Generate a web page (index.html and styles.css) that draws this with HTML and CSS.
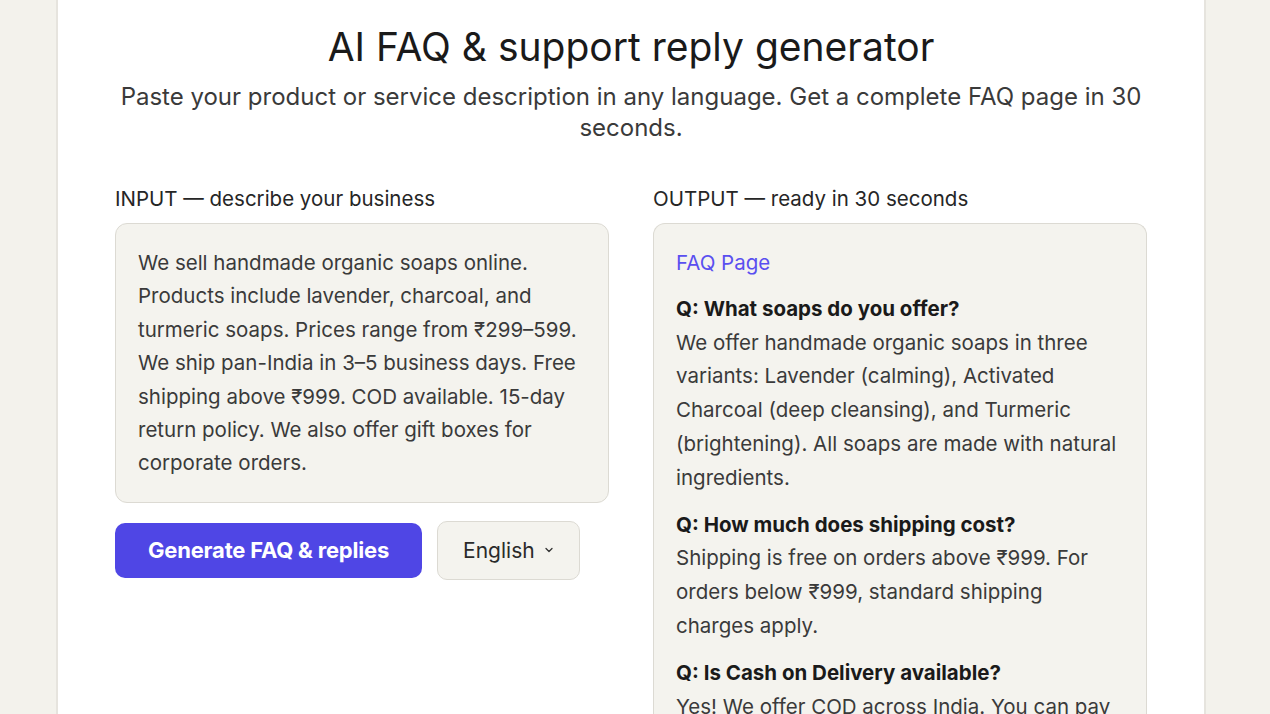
FILE: index.html
```html
<!DOCTYPE html>
<html lang="en">
<head>
    <meta charset="UTF-8">
    <title>AI FAQ &amp; support reply generator</title>
    <meta name="viewport" content="width=device-width, initial-scale=1.0">
    <link rel="stylesheet" href="styles.css">
</head>
<body>
    <div class="card">
        <h1 class="title">AI FAQ &amp; support reply generator</h1>
        <p class="subtitle">Paste your product or service description in any language. Get a complete FAQ page in 30 seconds.</p>

        <div class="columns">
            <div class="column">
                <div class="label">INPUT — describe your business</div>
                <div class="box input-box">We sell handmade organic soaps online. Products include lavender, charcoal, and turmeric soaps. Prices range from ₹299–599. We ship pan-India in 3–5 business days. Free shipping above ₹999. COD available. 15-day return policy. We also offer gift boxes for corporate orders.</div>
                <div class="actions">
                    <button class="generate">Generate FAQ &amp; replies</button>
                    <div class="lang">
                        English
                        <svg width="12" height="12" viewBox="0 0 12 12"><path d="M3 4.5 L6 7.5 L9 4.5" fill="none" stroke="#333" stroke-width="1.3" stroke-linecap="round" stroke-linejoin="round"/></svg>
                    </div>
                </div>
            </div>

            <div class="column">
                <div class="label">OUTPUT — ready in 30 seconds</div>
                <div class="box output-box">
                    <div class="faq-title">FAQ Page</div>
                    <div class="qa">
                        <div class="q">Q: What soaps do you offer?</div>
                        <div class="a">We offer handmade organic soaps in three variants: Lavender (calming), Activated Charcoal (deep cleansing), and Turmeric (brightening). All soaps are made with natural ingredients.</div>
                    </div>
                    <div class="qa">
                        <div class="q">Q: How much does shipping cost?</div>
                        <div class="a">Shipping is free on orders above ₹999. For orders below ₹999, standard shipping charges apply.</div>
                    </div>
                    <div class="qa">
                        <div class="q">Q: Is Cash on Delivery available?</div>
                        <div class="a">Yes! We offer COD across India. You can pay when your order arrives at your doorstep.</div>
                    </div>
                </div>
            </div>
        </div>
    </div>
</body>
</html>
```

FILE: styles.css
```css
body {
    margin: 0;
    background-color: #f3f2ec;
    font-family: Inter, "Noto Sans", sans-serif;
    color: #333;
    height: 714px;
    overflow: hidden;
}
.card {
    margin-left: 56px;
    width: 1032px;
    padding: 24px 57px 40px;
    background-color: #fff;
    border-left: 2px solid #e6e4de;
    border-right: 2px solid #e6e4de;
    min-height: 714px;
}
.title {
    margin: 0;
    text-align: center;
    font-size: 39px;
    font-weight: 400;
    line-height: 46px;
    color: #1a1a1a;
}
.subtitle {
    margin: 11px 0 0;
    text-align: center;
    font-size: 24px;
    line-height: 31px;
    color: #3a3a3a;
}
.columns {
    display: grid;
    grid-template-columns: 1fr 1fr;
    gap: 44px;
    margin-top: 44px;
}
.label {
    font-size: 20.5px;
    line-height: 24px;
    color: #262626;
    margin-bottom: 12px;
}
.box {
    background-color: #f4f3ee;
    border: 1px solid #dcdad3;
    border-radius: 12px;
    padding: 22px;
    font-size: 20.5px;
    line-height: 33.4px;
    color: #3a3a3a;
}
.actions {
    display: flex;
    align-items: center;
    gap: 15px;
    margin-top: 18px;
}
.generate {
    background-color: #4f46e5;
    color: #fff;
    border: none;
    border-radius: 10px;
    height: 55px;
    padding: 0 33px;
    font-family: inherit;
    font-size: 22px;
    font-weight: 700;
    letter-spacing: -0.2px;
    cursor: pointer;
}
.lang {
    display: flex;
    align-items: center;
    gap: 8px;
    height: 57px;
    padding: 0 24px 0 25px;
    background-color: #f4f3ee;
    border: 1px solid #dcdad3;
    border-radius: 10px;
    font-size: 21px;
    color: #2a2a2a;
}
.output-box {
    line-height: 33.8px;
    border-bottom: none;
    border-radius: 12px 12px 0 0;
}
.faq-title {
    color: #5a4ff0;
    margin-bottom: 12px;
}
.qa {
    margin-bottom: 13px;
}
.q {
    font-weight: 700;
    color: #1a1a1a;
}
```
